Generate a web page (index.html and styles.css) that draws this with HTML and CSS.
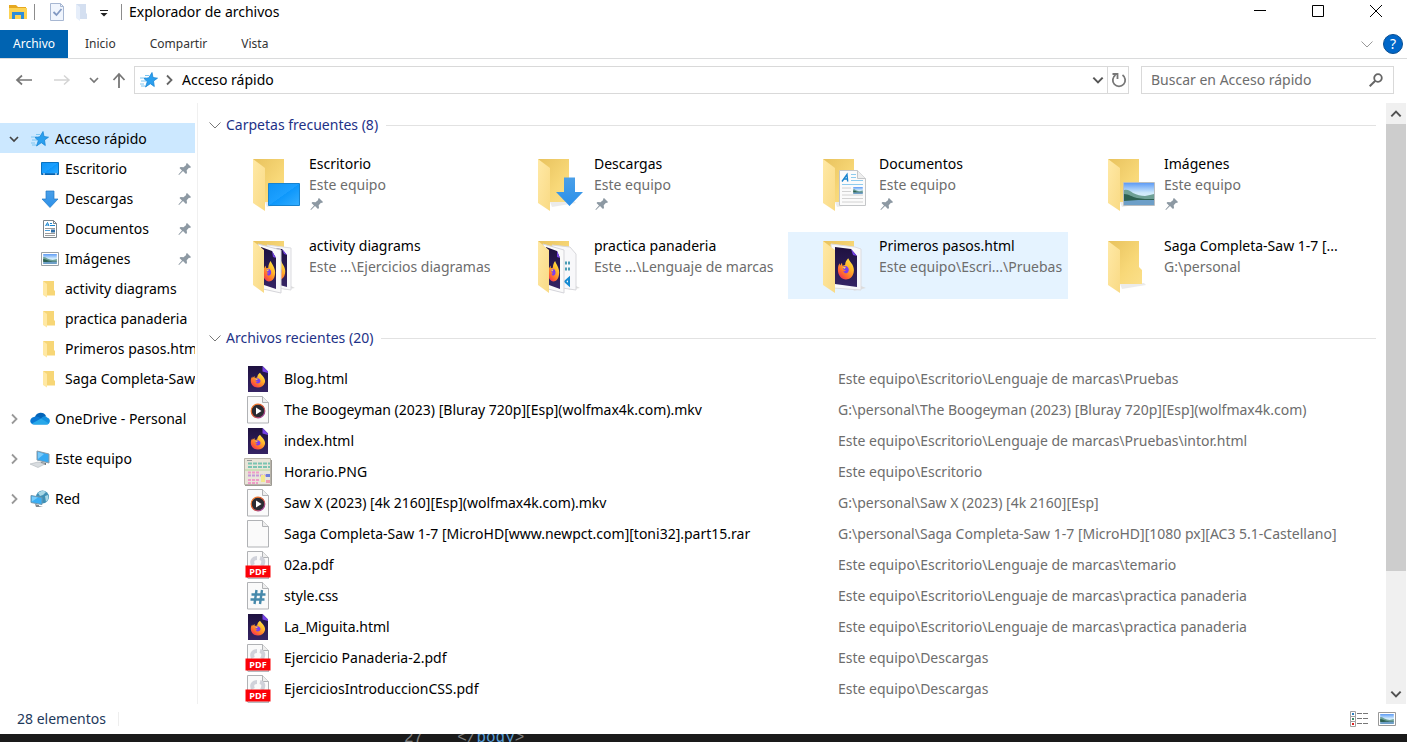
FILE: index.html
```html
<!DOCTYPE html>
<html lang="es">
<head>
<meta charset="utf-8">
<title>Explorador de archivos</title>
<link rel="stylesheet" href="styles.css">
</head>
<body>
<svg class="sprite" aria-hidden="true">
  <defs>
    <linearGradient id="g-back" x1="0" y1="0" x2="1" y2="1"><stop offset="0" stop-color="#e8c25d"/><stop offset=".6" stop-color="#f8d878"/><stop offset="1" stop-color="#fbdf8a"/></linearGradient>
    <linearGradient id="g-flap" x1="0" y1="0" x2="1" y2="1"><stop offset="0" stop-color="#ffe9a6"/><stop offset="1" stop-color="#f9da85"/></linearGradient>
    <linearGradient id="g-fire" x1=".9" y1="0" x2=".2" y2="1"><stop offset="0" stop-color="#fff04a"/><stop offset=".4" stop-color="#ffb62b"/><stop offset=".75" stop-color="#ff6a2d"/><stop offset="1" stop-color="#f02a60"/></linearGradient>
    <linearGradient id="g-night" x1="0" y1="0" x2="0" y2="1"><stop offset="0" stop-color="#1e1140"/><stop offset="1" stop-color="#352464"/></linearGradient>
    <linearGradient id="g-screen" x1="0" y1="0" x2="1" y2="1"><stop offset="0" stop-color="#0f93f5"/><stop offset=".5" stop-color="#1ca0ff"/><stop offset=".51" stop-color="#0d97fb"/><stop offset="1" stop-color="#35aeff"/></linearGradient>
    <linearGradient id="g-arrow" x1="0" y1="0" x2="0" y2="1"><stop offset="0" stop-color="#4a9fe8"/><stop offset="1" stop-color="#2b90ea"/></linearGradient>
    <linearGradient id="g-sky" x1="0" y1="0" x2="0" y2="1"><stop offset="0" stop-color="#5f9cf5"/><stop offset=".45" stop-color="#cfeafc"/><stop offset="1" stop-color="#e6f3f5"/></linearGradient>
    <linearGradient id="g-ring" x1="0" y1="0" x2="1" y2="1"><stop offset="0" stop-color="#ff8a2a"/><stop offset=".5" stop-color="#d9532c"/><stop offset="1" stop-color="#8a3fc0"/></linearGradient>
  </defs>

  <symbol id="folder" viewBox="0 0 50 54">
    <path d="M12 44l24-1 2 2-24 4z" fill="#d8d8d8" opacity=".5"/>
    <path d="M0 1H31V27L34 30V44H8z" fill="url(#g-back)"/>
    <path d="M0 1L12 10V53L0 45z" fill="url(#g-flap)"/>
  </symbol>
  <symbol id="fox" viewBox="0 0 20 20" preserveAspectRatio="none">
    <path d="M12.500 1c1 2 2.500 3 4.500 5.500 1 1.500 2.500 4 1.500 7C17.500 17.500 14 19.500 10 19.500 5 19.500 1 16 1 11 1 8 2 6.500 3 5.500l.3 2L5.500 5l.5 2.500 3-.5c0-2.500 1.500-4.500 3.500-6z" fill="url(#g-fire)"/>
    <path d="M6.500 9c2-1.500 4-1.500 5.500 0 1.500 1 1.500 3.500 0 4.500-2.500 1.500-4.500.5-5-1.500 1.500.8 2.500.2 3-.6C8.500 12 7 11.500 6.500 9z" fill="#7b3df0"/>
    <path d="M6 9l4-.6-1.500 2z" fill="#ffd24a"/>
  </symbol>
  <symbol id="landscape" viewBox="0 0 30 22">
    <path d="M0 0h30v22H0z" fill="url(#g-sky)"/>
    <path d="M0 7c4-1 6 1 9 3 4 2 8 3 12 3l5-1 4-1v5H0z" fill="#6ea096"/>
    <path d="M0 11c5 0 8 3 13 4 5 1 10 1 17 1v2H0z" fill="#2d6152"/>
    <path d="M0 18l14-1h16v5H0z" fill="#6d9fc8"/>
  </symbol>
  <symbol id="pin" viewBox="0 0 14 14">
    <path d="M9 1l4 4-1 1-1-.2L8.700 8.200 9 11l-1 1-3-3-4 4-.6-.5L4 8.500 1.500 6l1-1 3 .2L8.200 3 8 2z" fill="#8d99a3"/>
  </symbol>
  <symbol id="star" viewBox="0 0 18 18">
    <path d="M0 7h6M1 10h5M0 13h4M5 4.500h4M1 15h4" stroke="#7cc6f2"/>
    <path d="M12 1.500l1 5 4.500.7-4 2.800.8 5.500-4-2.800L5.500 16l1.800-5.300L4 7.500l4.800-.7z" fill="#2a9fee" stroke="#1b87d6" stroke-width=".8"/>
  </symbol>
  <symbol id="down" viewBox="0 0 12 12"><path d="M2 4l4 4 4-4" fill="none" stroke="currentColor" stroke-width="1.700"/></symbol>
  <symbol id="thin-down" viewBox="0 0 12 12"><path d="M.5 3.500L6 9l5.500-5.500" fill="none" stroke="currentColor"/></symbol>
  <symbol id="right" viewBox="0 0 12 12"><path d="M4 1.500L8.500 6 4 10.500" fill="none" stroke="currentColor" stroke-width="1.800"/></symbol>

  <symbol id="s-desktop" viewBox="0 0 18 18"><path d="M.5 2.500h17v12H.5z" fill="url(#g-screen)" stroke="#0a72c0"/><path d="M1 14h16" stroke="#0a4f92"/><path d="M2 14h2M14 14h2" stroke="#fff"/></symbol>
  <symbol id="s-download" viewBox="0 0 18 18"><path d="M5 1h8v8h4l-8 8.500L1 9h4z" fill="url(#g-arrow)" stroke="#2478c4" stroke-width=".7"/></symbol>
  <symbol id="s-doc" viewBox="0 0 18 18">
    <path d="M2.500.5h10l3 3v14h-13z" fill="#fff" stroke="#7d858b"/><path d="M12.500.5v3h3" fill="none" stroke="#7d858b"/>
    <path d="M4.500 6l2-3.500L8 6M5 5h3M9 3.500h2M9 5.500h5" fill="none" stroke="#1b86d0"/>
    <path d="M4 8.500h10M4 13.500h10M4 15.500h10" stroke="#9b9b9b"/><path d="M4 10.500h5" stroke="#4aa0de"/><path d="M10 9.500h4v3h-4z" fill="#2f6fa8"/>
  </symbol>
  <symbol id="s-image" viewBox="0 0 18 18"><path d="M.5 2.500h17v13H.5z" fill="#fff" stroke="#9aa0a5"/><use href="#landscape" x="2" y="4" width="14" height="10"/></symbol>
  <symbol id="s-folder" viewBox="0 0 18 18"><path d="M2 1h11v9l1 1v4.500H5z" fill="#f7d676"/><path d="M2 1l4 3v13.500L2 15z" fill="#ffe8a3"/></symbol>
  <symbol id="s-cloud" viewBox="0 0 20 18">
    <path d="M5 7a6 6 0 0 1 11-1l-6 5z" fill="#0364b8"/><path d="M4 7c3-1 5 0 7 1.500L4 14.500C-1 14-1 8 4 7z" fill="#0a78d4"/>
    <path d="M11 8.500C13 6 16 5.500 17 7.500c4 .5 4 7-1 7H4z" fill="#1490df"/><path d="M2 13.500l9-5 8 5c-1 1-2 1-3 1H4z" fill="#28a8ea"/>
  </symbol>
  <symbol id="s-pc" viewBox="0 0 20 18">
    <path d="M7 1l12 3v9L7 10z" fill="#37a9f2" stroke="#8b9aa5"/><path d="M8 2l6 2-6 5z" fill="#7bcaf9"/><path d="M11 12l5 1v2l-6-1z" fill="#6d767c"/><path d="M0 14l8-2 7 2-7 3.500z" fill="#d9dde0" stroke="#aeb5ba" stroke-width=".6"/>
  </symbol>
  <symbol id="s-net" viewBox="0 0 20 18">
    <circle cx="12.500" cy="7" r="6.500" fill="#3f8fb5"/><path d="M8 3c3-3 7-2 8-1l-3 3-3 1zM15 6l3-1c1 3 0 5-2 7z" fill="#a8d7e6"/>
    <path d="M1 5.500l11 2v7l-11-2z" fill="#39aef5" stroke="#6f97ae"/><path d="M2 6.500l6 1-6 4z" fill="#79ccfa"/><path d="M5 14l4 1v1l4 1H6z" fill="#80898f"/>
  </symbol>

  <symbol id="f-page" viewBox="0 0 28 28">
    <path d="M3.500.5h15l6 6v20.500h-21z" fill="#fafafa" stroke="#b0b2b5"/><path d="M18.500.5v6h6" fill="#eee" stroke="#b0b2b5"/>
  </symbol>
  <symbol id="f-html" viewBox="0 0 28 28">
    <path d="M4 1h14.500l5.500 5.500V27H4z" fill="url(#g-night)"/><path d="M18.500 1L24 6.500V8l-5.500-1.500z" fill="#7542e5"/>
    <use href="#fox" x="6" y="7" width="16" height="16"/>
  </symbol>
  <symbol id="f-video" viewBox="0 0 28 28">
    <use href="#f-page"/><circle cx="14" cy="15" r="6.800" fill="#2b2b33" stroke="url(#g-ring)" stroke-width="1.200"/><path d="M12 11.500l5.500 3.500-5.500 3.500z" fill="#fff"/>
  </symbol>
  <symbol id="f-css" viewBox="0 0 28 28">
    <use href="#f-page"/><path d="M12.500 8l-2 14M18 8l-2 14M7.500 12.500h14M6.500 17.500h14" stroke="#4689ab" stroke-width="2.400"/>
  </symbol>
  <symbol id="f-pdf" viewBox="0 0 28 28">
    <use href="#f-page"/><path d="M9 14c-2-4 0-7 4-7M16 7c4 1 4 4 2 8" fill="none" stroke="#d0d2da" stroke-width="4"/>
    <path d="M1.500 14.500h25v12h-25z" fill="#fb0207"/><text x="14" y="24" text-anchor="middle" class="pdf-label">PDF</text><path d="M4 27.500h21" stroke="#b7bbc0"/>
  </symbol>
  <symbol id="f-png" viewBox="0 0 28 28">
    <path d="M.5.5h26v26H.5z" fill="#e9e5d9" stroke="#b8b4aa"/><path d="M1 27.500h26.500V2" fill="none" stroke="#9d9a93"/>
    <path d="M3 2.500h5" stroke="#999"/><path d="M4 5.500h22M4 9h22" stroke="#7cc4b2" stroke-width="2" stroke-dasharray="4 1"/>
    <path d="M1 12h25" stroke="#b5d69a"/><path d="M4 14.500h12M4 22h12M4 25h10" stroke="#ef9bc8" stroke-width="2" stroke-dasharray="3 1"/>
    <path d="M4 17.500h22" stroke="#c497d8" stroke-width="2" stroke-dasharray="3 1"/><path d="M17 17h4v7h-4z" fill="#f3e88c"/><path d="M22 16h4v3h-4z" fill="#6c7fd8"/><path d="M22 22h4v3h-4z" fill="#ee9db2"/>
  </symbol>

  <symbol id="t-desktop" viewBox="0 0 50 54"><use href="#folder"/><path d="M15.500 25.500h31v22h-31z" fill="url(#g-screen)" stroke="#1682cf"/></symbol>
  <symbol id="t-download" viewBox="0 0 50 54"><use href="#folder"/><path d="M26 19.500h11V34h8L31.500 48 18 34h8z" fill="url(#g-arrow)"/></symbol>
  <symbol id="t-docs" viewBox="0 0 50 54"><use href="#folder"/>
    <path d="M16.500 12.500h18l8 8v27h-26z" fill="#fbfbfb" stroke="#c4c6c8"/><path d="M34.500 12.500v8h8" fill="#eee" stroke="#c4c6c8"/>
    <path d="M19 23.500l5-7 .7 7M20.500 21h4" fill="none" stroke="#1784cf" stroke-width="1.400"/>
    <path d="M28 16.500h5M28 19.500h5M28 22.500h12M19 26.500h21" stroke="#8ecbee"/><path d="M19 30h9M19 33.500h9M19 37h21M19 40.500h21M19 44h21" stroke="#d2d2d2"/><use href="#landscape" x="30" y="29" width="10" height="7"/>
  </symbol>
  <symbol id="t-images" viewBox="0 0 50 54"><use href="#folder"/><path d="M15.500 24.500h31v23h-31z" fill="#fff" stroke="#b9bec2"/><use href="#landscape" x="16" y="25" width="30" height="22"/></symbol>
  <symbol id="t-html" viewBox="0 0 50 54">
    <path d="M0 1H31V44H8z" fill="url(#g-back)"/><path d="M38 46l5 2-13 3z" fill="#ddd"/>
    <path d="M8 4l24 3 6 2v41L10 48z" fill="#f8f8fa" stroke="#dcdce0"/>
    <path d="M12 7l16 2 6 7v31l-22-3z" fill="url(#g-night)"/><path d="M28 9l6 7-4-1z" fill="#7542e5"/><use href="#fox" x="14" y="17" width="18" height="23"/>
    <path d="M0 1L12 10V53L0 45z" fill="url(#g-flap)"/>
  </symbol>
  <symbol id="t-two" viewBox="0 0 50 54">
    <path d="M0 1H31V44H8z" fill="url(#g-back)"/><path d="M38 46l4 2-12 2z" fill="#ddd"/>
    <path d="M14 5l24 3v42l-14-2z" fill="#f8f8fa" stroke="#dcdce0"/><path d="M18 8l11 1 5 6v32l-11-3z" fill="url(#g-night)"/><path d="M29 9l5 6-3-1z" fill="#7542e5"/><use href="#fox" x="20" y="20" width="13" height="20"/>
    <path d="M5 4l23 6v43L10 49z" fill="#fafafa" stroke="#d5d5da"/><path d="M8 7l11 4 4 7v31l-12-4z" fill="url(#g-night)"/><path d="M19 11l4 7-3-1z" fill="#7542e5"/><use href="#fox" x="9" y="20" width="14" height="22"/>
    <path d="M0 1L11 10V53L0 45z" fill="url(#g-flap)"/>
  </symbol>
  <symbol id="t-mixed" viewBox="0 0 50 54">
    <path d="M0 1H31V44H8z" fill="url(#g-back)"/><path d="M38 46l4 2-12 2z" fill="#ddd"/>
    <path d="M14 5l18 2 6 7v36l-14-2z" fill="#f8f8fa" stroke="#d8d8dc"/><path d="M27 23h5M27 29h5" stroke="#4b9cb5" stroke-width="3" stroke-dasharray="2 1"/><path d="M31 38v7l-4-3.500z" fill="none" stroke="#168bd2" stroke-width="2"/>
    <path d="M5 4l21 6v43L10 49z" fill="#fafafa" stroke="#d5d5da"/><path d="M8 7l11 4 3 7v31l-11-4z" fill="url(#g-night)"/><path d="M19 11l3 7-3-1z" fill="#7542e5"/><use href="#fox" x="9" y="20" width="13" height="22"/>
    <path d="M0 1L11 10V53L0 45z" fill="url(#g-flap)"/>
  </symbol>
</svg>

<main class="window">
  <header class="titlebar">
    <svg class="app-icon" viewBox="0 0 18 16"><path d="M0 1h7l2 2h8v4H0z" fill="#e6a820"/><path d="M0 4h18v11H0z" fill="#fcd354"/><path d="M3 8h12v7h-3v-4H6v4H3z" fill="#2c8ddb"/></svg>
    <span class="divider"></span>
    <button class="quick" aria-label="Propiedades"><svg viewBox="0 0 16 18"><path d="M1.500.5h10l3 3v14h-13z" fill="#f0f5fd" stroke="#a7b7d2"/><path d="M11.500.5v3h3" fill="none" stroke="#a7b7d2"/><path d="M4.500 9l3 3 5-6" fill="none" stroke="#8299c2" stroke-width="1.800"/></svg></button>
    <button class="quick" aria-label="Nueva carpeta"><svg viewBox="0 0 16 18"><path d="M2 1h10v9l1 1v5H5z" fill="#d4dff0"/><path d="M2 1l4 3v14l-4-3z" fill="#e6eefa"/></svg></button>
    <button class="quick last" aria-label="Personalizar"><svg viewBox="0 0 16 18"><path d="M3 7.500h8" stroke="#222"/><path d="M3.500 10h7L7 13.500z" fill="#222"/></svg></button>
    <span class="divider"></span>
    <h1 class="title">Explorador de archivos</h1>
    <div class="window-buttons">
      <button aria-label="Minimizar"><svg viewBox="0 0 14 14"><path d="M1 5.500h12" stroke="#000"/></svg></button>
      <button aria-label="Maximizar"><svg viewBox="0 0 14 14"><path d="M1.500.5h11v11h-11z" fill="none" stroke="#000"/></svg></button>
      <button aria-label="Cerrar"><svg viewBox="0 0 14 14"><path d="M1 0l12 12M13 0L1 12" stroke="#000"/></svg></button>
    </div>
  </header>

  <nav class="ribbon">
    <button class="tab active">Archivo</button>
    <button class="tab">Inicio</button>
    <button class="tab">Compartir</button>
    <button class="tab">Vista</button>
    <button class="expand" aria-label="Expandir"><svg><use href="#thin-down"/></svg></button>
    <button class="help" aria-label="Ayuda">?</button>
  </nav>

  <div class="toolbar">
    <button class="nav-button" aria-label="Atrás"><svg viewBox="0 0 18 18"><path d="M17 9H2M7 4.500L2 9l5 4.500" fill="none" stroke="#777" stroke-width="1.700"/></svg></button>
    <button class="nav-button" aria-label="Adelante"><svg viewBox="0 0 18 18"><path d="M1 9h15M11 4.500L16 9l-5 4.500" fill="none" stroke="#d4d4d4" stroke-width="1.500"/></svg></button>
    <button class="nav-button narrow" aria-label="Recientes"><svg class="small"><use href="#down"/></svg></button>
    <button class="nav-button narrow" aria-label="Arriba"><svg viewBox="0 0 18 18"><path d="M9 17V3M3.500 9L9 3l5.500 6" fill="none" stroke="#777" stroke-width="1.800"/></svg></button>
    <div class="address">
      <svg class="star"><use href="#star"/></svg>
      <svg class="crumb"><use href="#right"/></svg>
      <span class="location">Acceso rápido</span>
      <button class="drop" aria-label="Ubicaciones"><svg><use href="#down"/></svg></button>
      <button class="refresh" aria-label="Actualizar"><svg viewBox="0 0 18 18"><path d="M5.500 4A6.200 6.200 0 1 0 12.500 4" fill="none" stroke="#777" stroke-width="1.800"/><path d="M2.500 3h5v5" fill="none" stroke="#777" stroke-width="1.800"/></svg></button>
    </div>
    <label class="search">
      <input type="text" placeholder="Buscar en Acceso rápido" aria-label="Buscar en Acceso rápido">
      <svg viewBox="0 0 14 14"><circle cx="9" cy="5" r="3.800" fill="none" stroke="#666" stroke-width="1.800"/><path d="M6.300 7.700L.7 13.300" stroke="#666" stroke-width="2"/></svg>
    </label>
  </div>

  <div class="body">
    <nav class="sidebar">
      <button class="node selected"><svg class="chevron"><use href="#down"/></svg><svg class="node-icon"><use href="#star"/></svg><span>Acceso rápido</span></button>
      <button class="node child"><svg class="node-icon"><use href="#s-desktop"/></svg><span>Escritorio</span><svg class="pin"><use href="#pin"/></svg></button>
      <button class="node child"><svg class="node-icon"><use href="#s-download"/></svg><span>Descargas</span><svg class="pin"><use href="#pin"/></svg></button>
      <button class="node child"><svg class="node-icon"><use href="#s-doc"/></svg><span>Documentos</span><svg class="pin"><use href="#pin"/></svg></button>
      <button class="node child"><svg class="node-icon"><use href="#s-image"/></svg><span>Imágenes</span><svg class="pin"><use href="#pin"/></svg></button>
      <button class="node child"><svg class="node-icon"><use href="#s-folder"/></svg><span>activity diagrams</span></button>
      <button class="node child"><svg class="node-icon"><use href="#s-folder"/></svg><span>practica panaderia</span></button>
      <button class="node child"><svg class="node-icon"><use href="#s-folder"/></svg><span>Primeros pasos.htm</span></button>
      <button class="node child"><svg class="node-icon"><use href="#s-folder"/></svg><span>Saga Completa-Saw</span></button>
      <button class="node root"><svg class="chevron"><use href="#right"/></svg><svg class="node-icon"><use href="#s-cloud"/></svg><span>OneDrive - Personal</span></button>
      <button class="node root"><svg class="chevron"><use href="#right"/></svg><svg class="node-icon"><use href="#s-pc"/></svg><span>Este equipo</span></button>
      <button class="node root"><svg class="chevron"><use href="#right"/></svg><svg class="node-icon"><use href="#s-net"/></svg><span>Red</span></button>
    </nav>

    <div class="content">
      <h2 class="group"><svg><use href="#thin-down"/></svg>Carpetas frecuentes (8)</h2>
      <div class="tiles">
        <button class="tile"><svg class="tile-icon"><use href="#t-desktop"/></svg><span class="tile-text"><span>Escritorio</span><span class="where">Este equipo</span><svg class="pin"><use href="#pin"/></svg></span></button>
        <button class="tile"><svg class="tile-icon"><use href="#t-download"/></svg><span class="tile-text"><span>Descargas</span><span class="where">Este equipo</span><svg class="pin"><use href="#pin"/></svg></span></button>
        <button class="tile"><svg class="tile-icon"><use href="#t-docs"/></svg><span class="tile-text"><span>Documentos</span><span class="where">Este equipo</span><svg class="pin"><use href="#pin"/></svg></span></button>
        <button class="tile"><svg class="tile-icon"><use href="#t-images"/></svg><span class="tile-text"><span>Imágenes</span><span class="where">Este equipo</span><svg class="pin"><use href="#pin"/></svg></span></button>
        <button class="tile"><svg class="tile-icon"><use href="#t-two"/></svg><span class="tile-text"><span>activity diagrams</span><span class="where">Este ...\Ejercicios diagramas</span></span></button>
        <button class="tile"><svg class="tile-icon"><use href="#t-mixed"/></svg><span class="tile-text"><span>practica panaderia</span><span class="where">Este ...\Lenguaje de marcas</span></span></button>
        <button class="tile hover"><svg class="tile-icon"><use href="#t-html"/></svg><span class="tile-text"><span>Primeros pasos.html</span><span class="where">Este equipo\Escri...\Pruebas</span></span></button>
        <button class="tile"><svg class="tile-icon"><use href="#folder"/></svg><span class="tile-text"><span>Saga Completa-Saw 1-7 [...</span><span class="where">G:\personal</span></span></button>
      </div>

      <h2 class="group recent"><svg><use href="#thin-down"/></svg>Archivos recientes (20)</h2>
      <table class="files">
        <tbody>
        <tr><td class="file-icon"><svg><use href="#f-html"/></svg></td><td class="name">Blog.html</td><td class="path">Este equipo\Escritorio\Lenguaje de marcas\Pruebas</td></tr>
        <tr><td class="file-icon"><svg><use href="#f-video"/></svg></td><td class="name">The Boogeyman (2023) [Bluray 720p][Esp](wolfmax4k.com).mkv</td><td class="path">G:\personal\The Boogeyman (2023) [Bluray 720p][Esp](wolfmax4k.com)</td></tr>
        <tr><td class="file-icon"><svg><use href="#f-html"/></svg></td><td class="name">index.html</td><td class="path">Este equipo\Escritorio\Lenguaje de marcas\Pruebas\intor.html</td></tr>
        <tr><td class="file-icon"><svg><use href="#f-png"/></svg></td><td class="name">Horario.PNG</td><td class="path">Este equipo\Escritorio</td></tr>
        <tr><td class="file-icon"><svg><use href="#f-video"/></svg></td><td class="name">Saw X (2023) [4k 2160][Esp](wolfmax4k.com).mkv</td><td class="path">G:\personal\Saw X (2023) [4k 2160][Esp]</td></tr>
        <tr><td class="file-icon"><svg><use href="#f-page"/></svg></td><td class="name">Saga Completa-Saw 1-7 [MicroHD[www.newpct.com][toni32].part15.rar</td><td class="path">G:\personal\Saga Completa-Saw 1-7 [MicroHD][1080 px][AC3 5.1-Castellano]</td></tr>
        <tr><td class="file-icon"><svg><use href="#f-pdf"/></svg></td><td class="name">02a.pdf</td><td class="path">Este equipo\Escritorio\Lenguaje de marcas\temario</td></tr>
        <tr><td class="file-icon"><svg><use href="#f-css"/></svg></td><td class="name">style.css</td><td class="path">Este equipo\Escritorio\Lenguaje de marcas\practica panaderia</td></tr>
        <tr><td class="file-icon"><svg><use href="#f-html"/></svg></td><td class="name">La_Miguita.html</td><td class="path">Este equipo\Escritorio\Lenguaje de marcas\practica panaderia</td></tr>
        <tr><td class="file-icon"><svg><use href="#f-pdf"/></svg></td><td class="name">Ejercicio Panaderia-2.pdf</td><td class="path">Este equipo\Descargas</td></tr>
        <tr><td class="file-icon"><svg><use href="#f-pdf"/></svg></td><td class="name">EjerciciosIntroduccionCSS.pdf</td><td class="path">Este equipo\Descargas</td></tr>
        </tbody>
      </table>
    </div>

    <div class="scrollbar">
      <button aria-label="Subir"><svg viewBox="0 0 12 12"><path d="M2 8l4-4 4 4" fill="none" stroke="#505050" stroke-width="1.700"/></svg></button>
      <div class="thumb"></div>
      <div class="rest"></div>
      <button aria-label="Bajar"><svg viewBox="0 0 12 12"><path d="M2 4l4 4 4-4" fill="none" stroke="#505050" stroke-width="1.700"/></svg></button>
    </div>
  </div>

  <footer class="status">
    <span class="count">28 elementos</span>
    <button class="view" aria-label="Detalles"><svg viewBox="0 0 18 16"><path d="M.5.5h5v5h-5zM.5 5.500h5v5h-5zM.5 10.500h5v5h-5z" fill="#fff" stroke="#a0a0a0"/><path d="M2 2h2v2H2z" fill="#2f7fbf"/><path d="M2 7h2v2H2z" fill="#3f8a6a"/><path d="M2 12h2v2H2z" fill="#d22"/><path d="M7 2.500h5M13 2.500h5M7 7.500h5M13 7.500h5M7 12.500h5M13 12.500h5" stroke="#777"/></svg></button>
    <button class="view" aria-label="Iconos"><svg viewBox="0 0 18 16"><path d="M.5 1.500h17v13H.5z" fill="#fff" stroke="#999"/><use href="#landscape" x="2" y="3" width="14" height="10"/></svg></button>
  </footer>
</main>
<div class="editor"><span class="line-number">27</span><code>&lt;/<b>body</b>&gt;</code></div>
</body>
</html>
```

FILE: styles.css
```css
* { box-sizing: border-box; }

body {
  margin: 0;
  height: 100vh;
  display: flex;
  flex-direction: column;
  overflow: hidden;
  background: #1a1a1a;
  color: #000;
  font: 14px/20px "Noto Sans", "Open Sans", sans-serif;
}

button {
  margin: 0;
  padding: 0;
  border: 0;
  background: none;
  color: inherit;
  font: inherit;
  text-align: left;
}

svg { display: block; flex: none; }
.sprite { position: absolute; width: 0; height: 0; }
.pdf-label { font: bold 9px "Open Sans", sans-serif; fill: #fff; }

.window {
  flex: 1;
  min-height: 0;
  display: flex;
  flex-direction: column;
  background: #fff;
}

/* Title bar */
.titlebar { display: flex; align-items: center; height: 30px; padding: 0 0 6px 9px; }
.app-icon { width: 18px; height: 16px; }
.divider { width: 1px; height: 16px; margin: 0 7px; background: #8c8c8c; }
.quick { width: 25px; padding-left: 7px; }
.quick.last { width: 22px; padding-left: 5px; }
.quick svg { width: 16px; height: 18px; }
.title { margin: 0; font-size: 14px; font-weight: 400; }
.window-buttons { display: flex; margin-left: auto; padding-right: 2px; }
.window-buttons button { width: 58px; display: flex; justify-content: center; }
.window-buttons svg { width: 14px; height: 14px; }

/* Ribbon tabs */
.ribbon { display: flex; align-items: center; height: 29px; border-bottom: 1px solid #dadbdc; padding-right: 4px; color: #333; font-size: 12px; }
.tab { height: 28px; padding: 0 17px; }
.tab.active { padding: 0 13px; background: #0063b1; color: #fff; }
.expand { margin-left: auto; color: #999; }
.expand svg { width: 12px; height: 12px; }
.help { width: 20px; height: 20px; margin-left: 10px; border: 1px solid #0a4f92; border-radius: 50%; background: #0067c9; color: #fff; font-size: 14px; line-height: 18px; text-align: center; }

/* Navigation and address row */
.toolbar { display: flex; align-items: center; height: 44px; padding: 0 13px 2px 5px; }
.nav-button { width: 38px; display: flex; justify-content: center; color: #777; }
.nav-button.narrow { width: 25px; }
.nav-button svg { width: 18px; height: 18px; }
.nav-button svg.small { width: 12px; height: 12px; }
.address { flex: 1; display: flex; align-items: center; height: 28px; margin-left: 3px; padding-left: 5px; border: 1px solid #d9d9d9; color: #000; }
.star { width: 18px; height: 18px; }
.crumb { width: 12px; height: 12px; margin: 0 7px 0 5px; color: #666; }
.drop { margin: 0 2px 0 auto; color: #555; }
.drop svg { width: 14px; height: 14px; }
.refresh { height: 26px; padding: 0 0 0 2px; border-left: 1px solid #d9d9d9; }
.refresh svg { width: 18px; height: 18px; }
.search { width: 253px; height: 28px; margin-left: 12px; padding: 0 10px 0 9px; display: flex; align-items: center; border: 1px solid #d9d9d9; }
.search input { flex: 1; min-width: 0; padding: 0; border: 0; outline: 0; background: none; font: inherit; }
.search input::placeholder { color: #6d6d6d; opacity: 1; }
.search svg { width: 14px; height: 14px; }

/* Tree and content */
.body { flex: 1; min-height: 0; display: flex; padding-right: 1px; }
.sidebar { flex: none; width: 198px; padding: 20px 2px 0 0; border-right: 1px solid #f0f0f0; overflow: hidden; }
.node { width: 100%; height: 30px; display: flex; align-items: center; padding: 2px 0 0 8px; overflow: hidden; white-space: nowrap; }
.node.selected { background: #cce8ff; }
.node.child { padding-left: 41px; }
.node.root { margin-bottom: 10px; }
.node.child + .root { margin-top: 10px; }
.chevron { width: 12px; height: 12px; margin-right: 11px; color: #444; }
.root .chevron { color: #999; }
.node-icon { width: 18px; height: 18px; margin-right: 6px; }
.root .node-icon { width: 20px; margin: 0 5px 0 -1px; }
.pin { width: 14px; height: 14px; }
.node .pin { margin: 0 3px 0 auto; }

.content { flex: 1; min-width: 0; padding: 12px 10px 0 11px; overflow: hidden; }
.group { display: flex; align-items: center; height: 20px; margin: 0; color: #1e3287; font-size: 14px; font-weight: 400; }
.group svg { width: 12px; height: 12px; margin-right: 5px; color: #777; }
.group::after { content: ""; flex: 1; height: 1px; margin-left: 8px; background: #e2e2e2; }
.group.recent { margin-top: 29px; }
.tiles { display: grid; grid-template-columns: repeat(auto-fill, 280px); gap: 15px 5px; padding: 15px 0 0 9px; }
.tile { display: flex; align-items: flex-start; height: 67px; padding: 3px 0 0 35px; white-space: nowrap; }
.tile.hover { background: #e5f3ff; }
.tile-icon { width: 50px; height: 54px; margin: 5px 6px 0 0; }
.tile-text { display: flex; flex-direction: column; line-height: 21px; }
.where { color: #6d6d6d; }
.tile-text .pin { margin: 2px 0 0 1px; }

.files { width: 100%; margin-top: 15px; border-collapse: collapse; table-layout: fixed; white-space: nowrap; }
.files td { height: 31px; padding: 0; }
.files .file-icon { width: 75px; padding-left: 35px; }
.file-icon svg { width: 28px; height: 28px; }
.files .name { width: 554px; }
.files .path { color: #6d6d6d; }

/* Scroll bar */
.scrollbar { width: 20px; display: flex; flex-direction: column; background: #f0f0f0; }
.scrollbar button { height: 21px; display: flex; align-items: center; justify-content: center; }
.scrollbar svg { width: 14px; height: 14px; }
.thumb { flex: 4; background: #cdcdcd; }
.rest { flex: 1; }

/* Status bar */
.status { height: 30px; display: flex; align-items: center; padding: 0 11px 0 17px; color: #1e395b; }
.count { padding-right: 12px; border-right: 1px solid #eee; line-height: 14px; margin-right: auto; }
.view { margin-left: 10px; }
.view svg { width: 18px; height: 16px; }

/* Editor window behind the explorer */
.editor { height: 8px; display: flex; align-items: center; padding-left: 404px; overflow: hidden; color: #808080; font: 16px/20px "Liberation Mono", monospace; }
.line-number { margin-right: 34px; }
.editor code { font: inherit; }
.editor b { color: #569cd6; font-weight: 400; }
```
